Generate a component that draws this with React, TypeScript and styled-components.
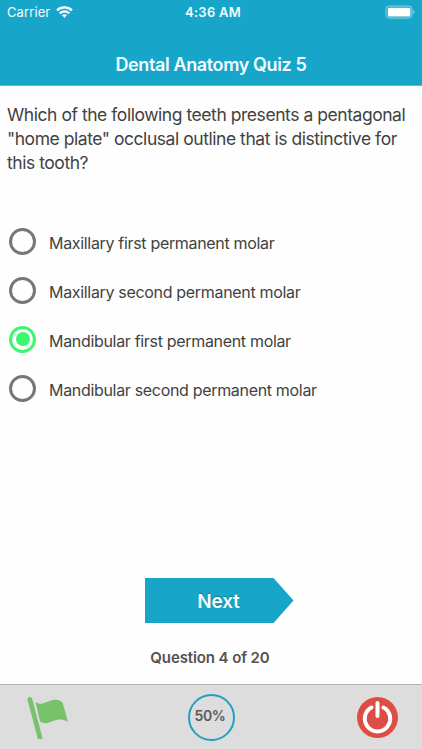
import React, { useState } from "react";
import styled, { createGlobalStyle } from "styled-components";

const Global = createGlobalStyle`
  * { box-sizing: border-box; }
  body { margin: 0; background: #fff; font-family: Inter, Roboto, sans-serif; color: #424242; }
`;

const Screen = styled.div`
  width: 422px;
  height: 750px;
  display: flex;
  flex-direction: column;
  overflow: hidden;
  background: #fefefe;
`;

const Header = styled.header`
  height: 86px;
  flex: none;
  background: #18a5ca;
  border-bottom: 1px solid #58bfd9;
  color: #f2fdff;
`;

const StatusBar = styled.div`
  height: 24px;
  display: grid;
  grid-template-columns: 1fr auto 1fr;
  align-items: center;
  padding: 0 7px;
  font-size: 13px;
  line-height: 24px;
`;

const Carrier = styled.div`
  display: flex;
  align-items: center;
  gap: 6px;
  letter-spacing: 0.1px;
`;

const Clock = styled.div`
  padding-left: 4px;
  font-weight: 600;
  letter-spacing: 0.25px;
`;

const BatteryIcon = styled.svg`
  justify-self: end;
`;

const Title = styled.h1`
  margin: 28px 0 0;
  text-align: center;
  font-size: 18px;
  line-height: 26px;
  font-weight: 600;
  letter-spacing: -0.38px;
`;

const Question = styled.p`
  margin: 17px 0 0 7px;
  height: 114px;
  font-size: 17.5px;
  line-height: 24px;
  letter-spacing: -0.45px;
  white-space: pre-line;
`;

const Options = styled.div`
  display: flex;
  flex-direction: column;
`;

const Option = styled.button`
  height: 48.9px;
  display: flex;
  align-items: center;
  gap: 13px;
  padding: 0 0 0 9px;
  border: 0;
  background: none;
  color: inherit;
  font: inherit;
  letter-spacing: normal;
  text-align: left;
`;

const Radio = styled.span<{ $on: boolean }>`
  width: 27px;
  height: 27px;
  flex: none;
  display: grid;
  place-items: center;
  border-radius: 50%;
  border: 3px solid ${(p) => (p.$on ? "#3cf770" : "#777")};
  &::after {
    content: "";
    width: 14px;
    height: 14px;
    margin: -0.5px;
    border-radius: 50%;
    background: ${(p) => (p.$on ? "#3cf770" : "transparent")};
  }
`;

const OptionLabel = styled.span`
  padding-top: 3px;
  font-size: 16px;
  line-height: 22px;
  letter-spacing: -0.32px;
`;

const Actions = styled.div`
  margin-top: auto;
  display: flex;
  flex-direction: column;
  align-items: center;
`;

const NextButton = styled.button`
  width: 149px;
  height: 45px;
  margin-left: 16px;
  padding: 1px 1px 0 0;
  border: 0;
  background: #18a5ca;
  clip-path: polygon(0 0, 129px 0, 100% 50%, 129px 100%, 0 100%);
  color: #f5feff;
  font: 600 19px/45px Inter, Roboto, sans-serif;
  letter-spacing: -0.2px;
  text-shadow: 0 -1px 1px rgba(0, 70, 95, 0.45);
`;

const Counter = styled.div`
  margin: 24px 2px 15px 0;
  font-size: 15px;
  line-height: 22px;
  font-weight: 600;
  letter-spacing: -0.1px;
  color: #535353;
`;

const Footer = styled.footer`
  height: 66px;
  flex: none;
  display: grid;
  grid-template-columns: 1fr auto 1fr;
  align-items: center;
  padding: 0 23px 0 25px;
  background: #dddddd;
  border-top: 1px solid #b2b2b2;
  border-bottom: 1px solid #d2d2d2;
  > :last-child {
    justify-self: end;
  }
`;

const Progress = styled.div`
  width: 47px;
  height: 47px;
  margin: 1px 1px 0 0;
  display: flex;
  justify-content: center;
  border: 2px solid #209fc3;
  border-radius: 50%;
  font-size: 14px;
  line-height: 39px;
  font-weight: 600;
  padding-right: 3px;
  letter-spacing: -0.4px;
  color: #5a5a5a;
`;

const ANSWERS = [
  "Maxillary first permanent molar",
  "Maxillary second permanent molar",
  "Mandibular first permanent molar",
  "Mandibular second permanent molar",
];

function Wifi() {
  return (
    <svg width="17" height="12" viewBox="0 0 17 12" fill="none" stroke="#fff" strokeWidth="2.3">
      <path d="M1 4.4C5.2.4 11.8.4 16 4.4" />
      <path d="M3.7 7.3c2.7-2.5 6.9-2.5 9.6 0" />
      <path d="M5.9 9.1c1.5-1.2 3.7-1.2 5.2 0L8.5 11.8Z" fill="#fff" stroke="none" />
    </svg>
  );
}

function Battery() {
  return (
    <BatteryIcon width="30" height="14" viewBox="0 0 30 14">
      <rect x="1" y="1" width="26" height="12" rx="3.3" fill="none" stroke="#8fd5e6" />
      <rect x="2.8" y="2.8" width="22.6" height="8.6" rx="1.5" fill="#fff" />
      <path d="M28.3 5v4c1.5-.8 1.5-3.2 0-4Z" fill="#8fd5e6" />
    </BatteryIcon>
  );
}

function Flag() {
  return (
    <svg width="46" height="46" viewBox="0 -2 46 46" fill="#79c26c">
      <path d="M2.5 3.9C2.2.9 6.4 0 7.2 2.8L17.7 42.900H12.900Z" />
      <path d="M10.4 5.7C16 10.3 21 5.900 27 4.300c4.500-1.200 8.500-.2 10.700 2.600L43 25.800C34 21.400 30 24.500 25 26.300c-4 1.500-7.500.9-10-.8Z" />
    </svg>
  );
}

function Power() {
  return (
    <svg width="42" height="42" viewBox="0 0 42 42" fill="none">
      <circle cx="20.5" cy="21.5" r="20.5" fill="#dc4e45" />
      <g stroke="#fff" strokeWidth="4" strokeLinecap="round">
        <path d="M14.5 11.5A12.7 12.7 0 1 0 26.5 11.5" />
        <path d="M20.5 7V20" />
      </g>
    </svg>
  );
}

export default function App() {
  const [selected, setSelected] = useState(2);
  return (
    <Screen>
      <Global />
      <Header>
        <StatusBar>
          <Carrier>
            Carrier <Wifi />
          </Carrier>
          <Clock>4:36 AM</Clock>
          <Battery />
        </StatusBar>
        <Title>Dental Anatomy Quiz 5</Title>
      </Header>
      <Question>
        {'Which of the following teeth presents a pentagonal\n"home plate" occlusal outline that is distinctive for\nthis tooth?'}
      </Question>
      <Options role="radiogroup">
        {ANSWERS.map((answer, i) => (
          <Option key={answer} role="radio" aria-checked={i === selected} onClick={() => setSelected(i)}>
            <Radio $on={i === selected} />
            <OptionLabel>{answer}</OptionLabel>
          </Option>
        ))}
      </Options>
      <Actions>
        <NextButton>Next</NextButton>
        <Counter>Question 4 of 20</Counter>
      </Actions>
      <Footer>
        <Flag />
        <Progress>50%</Progress>
        <Power />
      </Footer>
    </Screen>
  );
}
